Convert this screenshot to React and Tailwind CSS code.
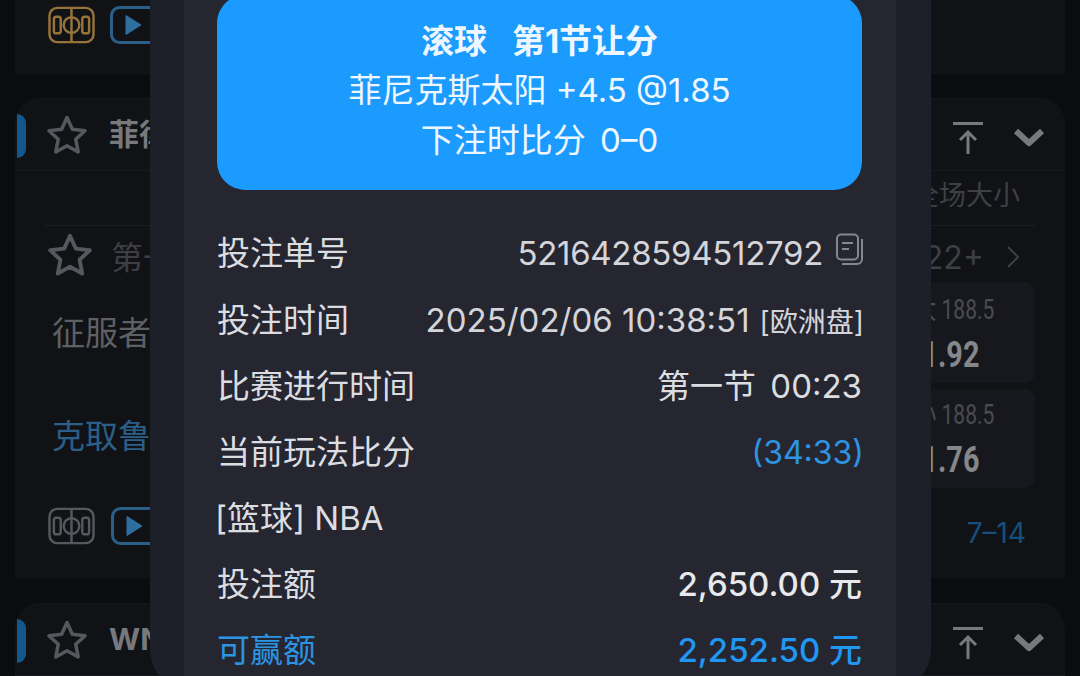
const sans = "font-['Inter','Noto_Sans_CJK_SC',sans-serif]";

function Court({ color }) {
  return (
    <svg width="47" height="38" viewBox="0 0 48 38" fill="none" stroke={color} strokeWidth="2.500" className="shrink-0">
      <rect x="1.500" y="1.500" width="45" height="35" rx="8" />
      <path d="M24 1v36" />
      <circle cx="24" cy="19" r="8" />
      <rect x="6" y="10.500" width="7" height="17" rx="2.500" />
      <rect x="35" y="10.500" width="7" height="17" rx="2.500" />
    </svg>
  );
}

function Play() {
  return (
    <svg width="40" height="38" viewBox="0 0 40 38" fill="none" className="shrink-0">
      <rect x="1.500" y="1.500" width="50" height="35" rx="8" stroke="#2b5f87" strokeWidth="3" />
      <path d="M16 9.500l15 9.500-15 9.500z" fill="#2f6f9f" stroke="#2f6f9f" strokeLinejoin="round" />
    </svg>
  );
}

function Star({ size = 42 }) {
  return (
    <svg width={size} height={size} viewBox="0 0 36 36" fill="none" stroke="#56585d" strokeWidth="3" strokeLinejoin="round" className="shrink-0">
      <path d="M18 3l4.600 10 10.900 1.300-8 7.400 2.100 10.800L18 27.200l-9.600 5.300 2.100-10.800-8-7.400L13.400 13z" />
    </svg>
  );
}

function CardHeader({ title }) {
  return (
    <div className="relative flex h-[72px] items-center border-b border-[#1a1b20] pl-[31px] pr-[20px]">
      <div className="absolute left-[2px] top-[15px] h-[44px] w-[9px] rounded-r-full bg-[#13588c]" />
      <Star />
      <span className={`ml-[21px] text-[30px] font-bold text-[#77797d] ${sans}`}>{title}</span>
      <div className="ml-auto mt-[6px] flex items-center gap-[30px]">
        <svg width="30" height="32" viewBox="0 0 30 32" fill="none" stroke="#77797d" strokeWidth="3">
          <path d="M0 1.500h30" />
          <path d="M15 32V11M7 18l8-8 8 8" />
        </svg>
        <svg width="32" height="20" viewBox="0 0 32 20" fill="none" stroke="#77797d" strokeWidth="6" strokeLinejoin="round">
          <path d="M3 3l13 12L29 3" />
        </svg>
      </div>
    </div>
  );
}

function OddsBox({ label, odds, className }) {
  return (
    <div className={`flex w-[200px] flex-col items-end rounded-[10px] bg-[#17181d] ${className}`}>
      <span className="mr-[41px] origin-right whitespace-nowrap font-['Roboto','Noto_Sans_CJK_SC',sans-serif] text-[28px] leading-[32px] text-[#4b4c51] [transform:scaleX(0.75)]">{label}</span>
      <span className="mt-[11px] mr-[56px] origin-right font-['Roboto',sans-serif] text-[36px] font-bold leading-[36px] text-[#85878b] [transform:scaleX(0.8)]">{odds}</span>
    </div>
  );
}

function Row({ label, children, labelClass = "text-[#dcdde1]" }) {
  return (
    <div className="flex h-[66.200px] items-center justify-between">
      <span className={labelClass}>{label}</span>
      {children}
    </div>
  );
}

function Background() {
  return (
    <div className="flex h-full flex-col bg-[#0b0c10] pl-[15px] pr-[15px]">
      <div className="flex h-[74px] shrink-0 items-start border-b border-[#15161a] bg-[#111216] pl-[33px] pt-[6px]">
        <Court color="#96733a" />
        <div className="ml-[15px]"><Play /></div>
      </div>

      <div className="mt-[24px] h-[480px] shrink-0 rounded-t-[26px] border-t border-[#17181c] bg-[#111216]">
        <CardHeader title="菲律" />
        <div className="h-[408px] pr-[30px]">
          <div className={`flex h-[54px] items-center justify-end pb-[4px] pr-[15px] text-[27px] text-[#3f4045] ${sans}`}>全场大小</div>
          <div className="ml-[30px] border-t border-[#1c1d22]" />
          <div className={`flex h-[58px] items-center pl-[32px] pr-[16px] text-[32px] text-[#3e3f44] ${sans}`}>
            <Star size={46} />
            <span className="ml-[18px] mt-[6px]">第一</span>
            <span className="ml-auto mt-[6px]">22+</span>
            <svg className="ml-[23px] mt-[3px]" width="12" height="22" viewBox="0 0 12 22" fill="none" stroke="#3e3f44" strokeWidth="2">
              <path d="M1 1l10 10L1 21" />
            </svg>
          </div>
          <div className="flex justify-between pl-[37px]">
            <div className={`text-[33px] ${sans}`}>
              <div className="mt-[27px] leading-[44px] text-[#5e6064]">征服者</div>
              <div className="mt-[59px] leading-[44px] text-[#2b5f87]">克取鲁</div>
              <div className="mt-[49px] ml-[-4px] flex">
                <Court color="#56585d" />
                <div className="ml-[16px]"><Play /></div>
              </div>
            </div>
            <div className="mt-[-2px] flex flex-col gap-[6px]">
              <OddsBox className="h-[101px] pt-[12px]" label="大 188.5" odds="1.92" />
              <OddsBox className="h-[99px] pt-[10px]" label="小 188.5" odds="1.76" />
              <div className={`mt-[21px] pr-[9px] text-right text-[28px] leading-[36px] text-[#13507d] ${sans}`}>7–14</div>
            </div>
          </div>
        </div>
      </div>

      <div className="mt-[25px] shrink-0 rounded-t-[26px] border-t border-[#17181c] bg-[#111216]">
        <CardHeader title="WN" />
      </div>
    </div>
  );
}

export default function App() {
  return (
    <div className="relative h-[676px] w-[1080px] overflow-hidden">
      <Background />

      {/* modal over the list */}
      <div className="absolute left-[150px] top-[-60px] h-[750px] w-[781px] rounded-[40px] bg-[#1d2029] pl-[34px] pr-[35px]">
        <div className={`h-full bg-[#252630] pl-[33px] pr-[34px] pt-[55px] text-[33px] ${sans}`}>
          <div className="flex h-[195px] flex-col items-center justify-end rounded-[28px] bg-[#1a9bfd] pb-[25px] text-[#eef7ff]">
            <div className="font-bold leading-[49.500px]">滚球<span className="ml-[25px]">第1节让分</span></div>
            <div className="leading-[49.500px]">菲尼克斯太阳 +4.5 @1.85</div>
            <div className="leading-[49.500px] [word-spacing:5px]">下注时比分 0–0</div>
          </div>

          <div className="mt-[31px]">
            <Row label="投注单号">
              <div className="mr-[-1px] flex items-center gap-[12px] text-[#d4d5da]">
                <span className="tracking-[-0.3px]">5216428594512792</span>
                <svg className="mt-[-10px]" width="28" height="32" viewBox="0 0 28 32" fill="none" stroke="#85878f" strokeWidth="2">
                  <rect x="2" y="1.500" width="21" height="25" rx="4" />
                  <path d="M7 10h11M7 16h7" />
                  <path d="M27 6v20a5 5 0 0 1-5 5H7" />
                </svg>
              </div>
            </Row>
            <Row label="投注时间">
              <div className="mr-[-2px] flex items-baseline gap-[10px] text-[#d4d5da]">
                <span>2025/02/06 10:38:51</span>
                <span className="whitespace-nowrap text-[28px]">[欧洲盘]</span>
              </div>
            </Row>
            <Row label="比赛进行时间">
              <span className="text-[#dcdde1] [word-spacing:5px]">第一节 00:23</span>
            </Row>
            <Row label="当前玩法比分">
              <span className="mr-[-2px] text-[32px] text-[#2c94e3]">(34:33)</span>
            </Row>
            <Row label="[篮球] NBA" labelClass="ml-[-2px] text-[#dcdde1]" />
            <Row label="投注额">
              <span className="font-medium text-[#e8e9ec]">2,650.00 元</span>
            </Row>
            <Row label="可赢额" labelClass="text-[#2c94e3]">
              <span className="font-medium text-[#1f97f3]">2,252.50 元</span>
            </Row>
          </div>
        </div>
      </div>
    </div>
  );
}
